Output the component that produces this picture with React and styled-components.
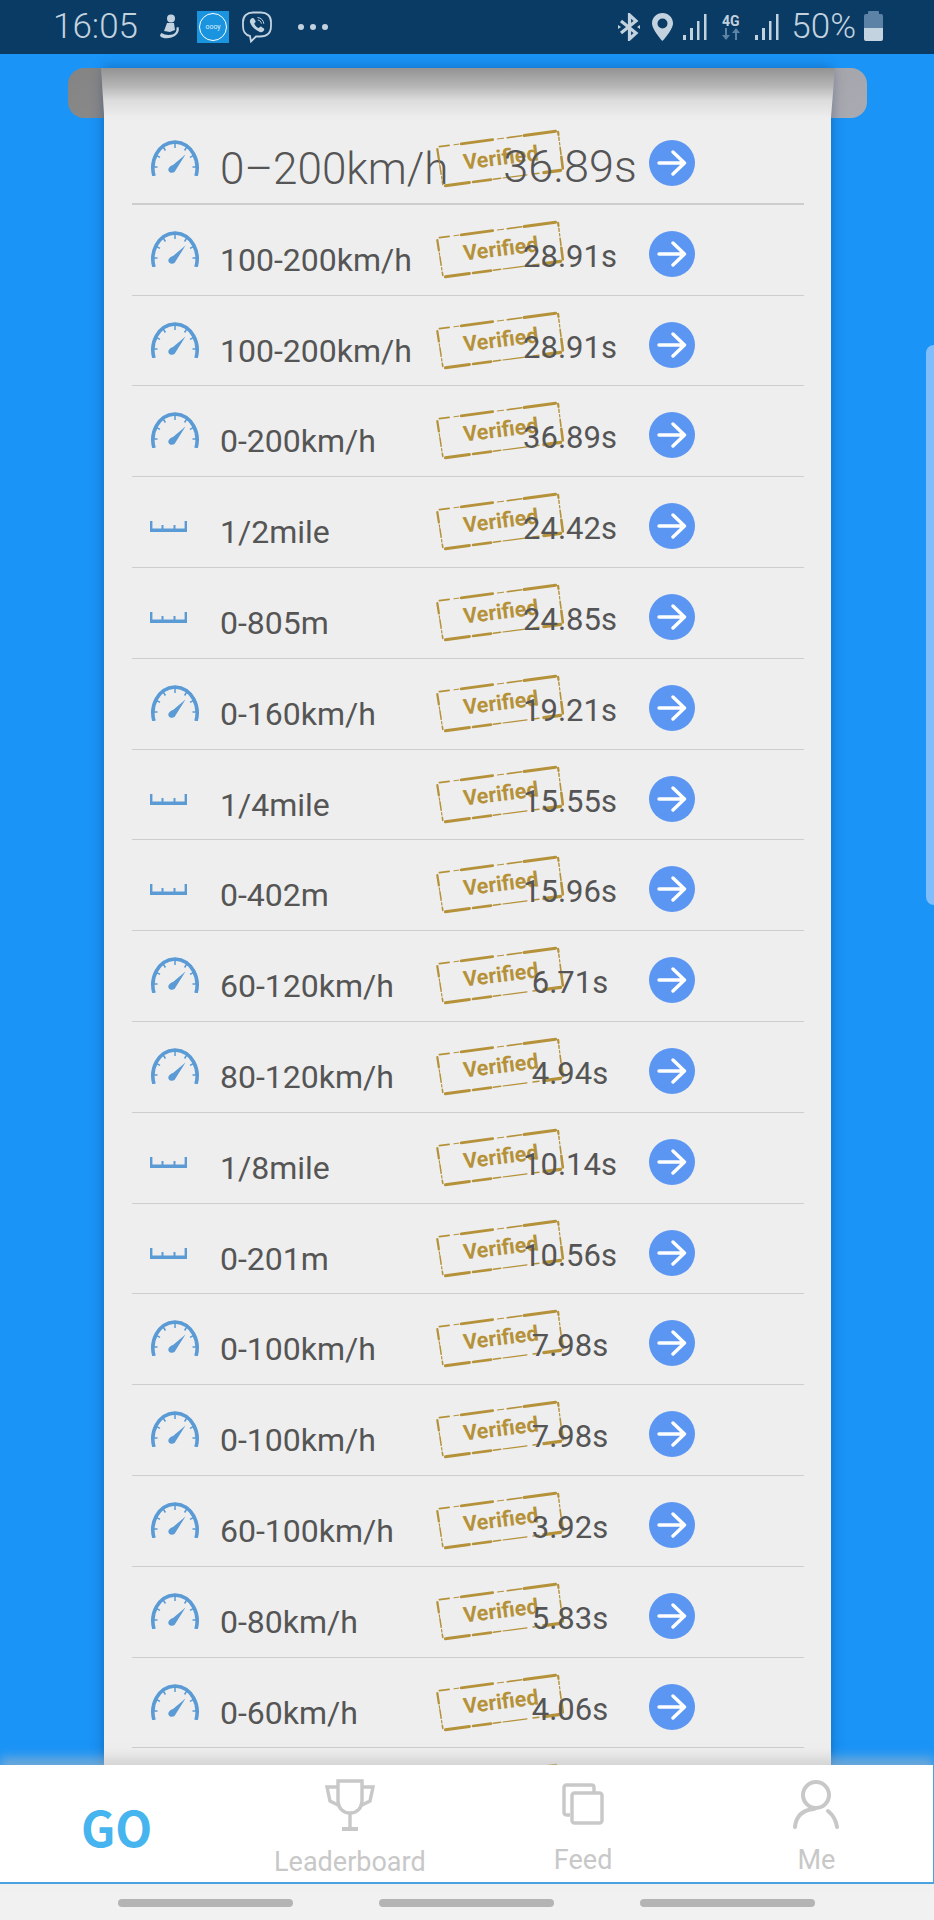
import React from "react";
import styled, { createGlobalStyle } from "styled-components";

const Global = createGlobalStyle`
  html, body { margin: 0; padding: 0; background: #1a94f7; }
  * { box-sizing: border-box; }
  #root { height: 1920px; overflow: hidden; }
`;

const Page = styled.div`
  height: 1920px;
  display: flex;
  flex-direction: column;
  position: relative;
  overflow: hidden;
  background: #1a94f7;
  font-family: Roboto, "Liberation Sans", sans-serif;
`;

const StatusBar = styled.header`
  flex: none;
  height: 54px;
  padding: 0 51px 0 53px;
  display: flex;
  align-items: center;
  justify-content: space-between;
  background: #0a3b64;
  color: #c3d2df;
`;
const StatusGroup = styled.div`
  display: flex;
  align-items: center;
`;
const Slot = styled.span`
  display: flex;
  align-items: center;
  margin-left: ${(p) => p.$gap || 0}px;
`;
const StatusText = styled.span`
  font-size: 35px;
  font-weight: 300;
  line-height: 54px;
`;
const AppSquare = styled.span`
  width: 32px;
  height: 32px;
  display: flex;
  align-items: center;
  justify-content: center;
  background: #1b94e0;
`;
const AppRing = styled.span`
  width: 28px;
  height: 28px;
  border: 1.5px solid #fff;
  border-radius: 50%;
  display: flex;
  align-items: center;
  justify-content: center;
  color: #d8eefc;
  font-size: 7px;
  line-height: 1;
`;
const Dots = styled.span`
  display: flex;
  gap: 6px;
  & > i {
    width: 6px;
    height: 6px;
    border-radius: 50%;
    background: #c3d2df;
  }
`;
const NetBadge = styled.span`
  width: 21px;
  display: flex;
  flex-direction: column;
  align-items: center;
  font-size: 14px;
  font-weight: 700;
  line-height: 14px;
  color: #c3d2df;
`;
const Battery = styled.span`
  width: 19px;
  height: 27px;
  position: relative;
  border-radius: 2px;
  background: linear-gradient(#5c83a5 0 52%, #c4d3e0 52% 100%);
  &::before {
    content: "";
    position: absolute;
    left: 4px;
    top: -3px;
    width: 11px;
    height: 3px;
    border-radius: 1px 1px 0 0;
    background: #5c83a5;
  }
`;

const Main = styled.main`
  flex: 1;
  min-height: 0;
  padding: 14px 67px 0 68px;
  overflow: hidden;
`;
const Roller = styled.div`
  height: 50px;
  margin-bottom: -50px;
  border-radius: 16px;
  background: linear-gradient(150deg, #848484 0%, #96969a 50%, #aaaab2 100%);
`;
const Paper = styled.section`
  position: relative;
  margin: 0 36px;
  height: 1800px;
  background: #eeeeee;
  box-shadow: 0 0 12px rgba(0, 40, 90, 0.4);
`;
const PaperCurl = styled.div`
  position: absolute;
  top: 0;
  left: -3px;
  right: -4px;
  height: 50px;
  clip-path: polygon(0 0, 100% 0, 99.45% 100%, 0.45% 100%);
  background: linear-gradient(#939393 0%, #b4b4b4 35%, #dcdcdc 65%, #eeeeee 100%);
`;
const List = styled.ul`
  position: relative;
  list-style: none;
  margin: 0;
  padding: 46px 27px 0 28px;
`;
const Row = styled.li`
  position: relative;
  height: 90.8px;
  display: grid;
  grid-template-columns: 88px 271px 158px 46px;
  align-items: start;
  border-bottom: ${(p) => (p.$big ? 2 : 1)}px solid #cdcdcd;
`;
const IconCell = styled.span`
  display: block;
  margin-left: 18px;
  margin-top: ${(p) => (p.$ruler ? 40 : 26)}px;
  height: 36px;
`;
const Label = styled.span`
  font-size: ${(p) => (p.$big ? 44 : 32)}px;
  font-weight: ${(p) => (p.$big ? 300 : 400)};
  line-height: ${(p) => (p.$big ? 52 : 38)}px;
  margin-top: ${(p) => (p.$big ? 29 : 36)}px;
  color: #555555;
  white-space: nowrap;
`;
const Time = styled.span`
  position: relative;
  z-index: 1;
  font-size: ${(p) => (p.$big ? 45 : 31)}px;
  font-weight: ${(p) => (p.$big ? 300 : 400)};
  line-height: ${(p) => (p.$big ? 52 : 38)}px;
  margin-top: ${(p) => (p.$big ? 27 : 33)}px;
  text-align: center;
  color: #555555;
  white-space: nowrap;
`;
const ArrowButton = styled.span`
  width: 46px;
  height: 46px;
  margin-top: 26px;
  border-radius: 50%;
  background: #5b96f2;
  display: flex;
  align-items: center;
  justify-content: center;
`;
const StampBox = styled.span`
  position: absolute;
  left: 302px;
  top: 15px;
  width: 132px;
  height: 60px;
`;
const StampText = styled.span`
  position: absolute;
  left: 29px;
  top: 17px;
  font-size: 21.5px;
  font-weight: 700;
  line-height: 24px;
  color: #b5923a;
  transform: rotate(-7deg);
`;

const TabBar = styled.nav`
  position: relative;
  z-index: 2;
  flex: none;
  height: 119px;
  display: grid;
  grid-template-columns: repeat(4, 1fr);
  background: #fff;
  border-bottom: 2px solid #4aa3e0;
  border-right: 1px solid #4aa3e0;
  box-shadow: 0 -8px 10px rgba(190, 190, 190, 0.5);
`;
const Tab = styled.div`
  display: flex;
  flex-direction: column;
  align-items: center;
  justify-content: flex-start;
  padding-top: ${(p) => p.$top}px;
  color: #c8c8c8;
`;
const TabLabel = styled.span`
  font-size: 27px;
  line-height: 30px;
  margin-top: ${(p) => p.$gap}px;
  white-space: nowrap;
`;
const GoLabel = styled.span`
  font-family: "Noto Sans CJK SC", "Noto Sans", sans-serif;
  font-size: 48px;
  font-weight: 700;
  line-height: 60px;
  margin-top: 31px;
  color: #46b4ee;
`;
const NavBar = styled.footer`
  flex: none;
  height: 36px;
  padding: 15px 119px 0 118px;
  display: flex;
  justify-content: space-between;
  background: #f1f1f1;
`;
const NavHandle = styled.i`
  display: block;
  width: 175px;
  height: 8px;
  border-radius: 4px;
  background: #b4b4b4;
`;
const EdgeHandle = styled.div`
  position: absolute;
  right: 0;
  top: 345px;
  width: 8px;
  height: 560px;
  border-radius: 8px 0 0 8px;
  background: #7fbdfb;
`;

const Gauge = () => (
  <svg width="50" height="36" viewBox="0 0 50 36" fill="none" stroke="#5a9ad5">
    <path d="M4 36 C0 22 7 3 25 2 C43 3 50 22 46 36" strokeWidth="3.6" />
    <path
      d="M25 3v5M13 6.500l2.400 4M37 6.500l-2.400 4M5.500 15l4.500 2.400M44.500 15l-4.500 2.400M3 27h4.500M47 27h-4.500"
      strokeWidth="1.5"
    />
    <path d="M35.500 14.500 L24.500 32 C21 34 17.500 31.800 18.500 28.500 C19.500 26.300 21 25.800 23 25 Z" fill="#5a9ad5" stroke="none" />
  </svg>
);
const Ruler = () => (
  <svg width="37" height="11" viewBox="0 0 37 11" fill="#5a9ad5">
    <rect x="0" y="7.500" width="37" height="3.500" />
    <rect x="0" y="0" width="2.400" height="9" />
    <rect x="11.500" y="4" width="2" height="5" />
    <rect x="23.500" y="4" width="2" height="5" />
    <rect x="34.600" y="0" width="2.400" height="9" />
  </svg>
);
const ArrowIcon = () => (
  <svg width="30" height="26" viewBox="0 0 30 26" fill="none" stroke="#fff" strokeWidth="3.400" strokeLinecap="round" strokeLinejoin="round">
    <path d="M2 13h25M16 2l11.500 11L16 24" />
  </svg>
);

const corners = { tl: [3, 18], tr: [124, 2], br: [129, 41], bl: [9, 57] };
const edges = [
  [corners.tl, corners.tr, [[0.02, 0.1, 1.8], [0.14, 0.18, 1], [0.2, 0.46, 2.8], [0.5, 0.55, 1], [0.58, 0.7, 1.6], [0.72, 0.98, 3]]],
  [corners.tr, corners.br, [[0.02, 0.1, 2.2], [0.16, 0.24, 1.4], [0.3, 0.36, 1.2], [0.42, 0.6, 1.6], [0.66, 0.96, 2.6]]],
  [corners.br, corners.bl, [[0.02, 0.16, 3.2], [0.2, 0.25, 1.4], [0.3, 0.5, 1.2], [0.52, 0.58, 1.6], [0.6, 0.75, 2.6], [0.78, 0.98, 3]]],
  [corners.bl, corners.tl, [[0.04, 0.12, 1.6], [0.18, 0.24, 1.2], [0.3, 0.52, 1.5], [0.56, 0.62, 1.2], [0.68, 0.95, 2.2]]],
];
const lerp = (a, b, t) => (a + (b - a) * t).toFixed(1);
const stampPath = edges.flatMap(([a, b, parts]) =>
  parts.map(([s, e, w]) => ({
    d: `M${lerp(a[0], b[0], s)} ${lerp(a[1], b[1], s)}L${lerp(a[0], b[0], e)} ${lerp(a[1], b[1], e)}`,
    w,
  }))
);

const Stamp = ({ bare }) => (
  <StampBox>
    <svg width="132" height="60" viewBox="0 0 132 60" fill="none" stroke="#b5923a" strokeLinecap="round">
      {stampPath.map((s) => (
        <path key={s.d} d={s.d} strokeWidth={s.w} />
      ))}
    </svg>
    {!bare && <StampText>Verified</StampText>}
  </StampBox>
);

const Samsung = () => (
  <svg width="22" height="26" viewBox="0 0 22 26" fill="#c3d2df">
    <circle cx="12" cy="4.500" r="4" />
    <path d="M8 9h7l1 7 -5 2 -6-1c1-3 2-5 3-8z" />
    <path d="M19.500 13c1.500 5-2 9-7 10.500-4 1.200-9 1-11-1 -1-1 0-2.500 1-3.500 3 2 7 2.500 11 1.500 3-1 4.500-3.500 4-7z" />
  </svg>
);
const Viber = () => (
  <svg width="30" height="32" viewBox="0 0 30 32" fill="none" stroke="#c3d2df" strokeWidth="1.800">
    <path d="M8 25C3 24 1 21 1 15V11C1 5 5 1.500 11 1.500h8C25 1.500 29 5 29 11v4c0 7-4 10.500-11 10.500h-4L9 30.500z" />
    <path
      d="M9.500 7.500c1-.8 2-.6 2.600.2l1.300 2c.5.800.3 1.500-.4 2l-.8.700c.8 2.200 2.400 3.800 4.600 4.700l.8-.9c.5-.6 1.300-.8 2-.3l2 1.400c.8.600.9 1.600.2 2.500-1 1.200-2.500 1.700-4 1.100C13 19 9.500 15.500 8 11.200c-.4-1.400.3-2.800 1.500-3.700z"
      fill="#c3d2df"
      stroke="none"
    />
    <path d="M15.500 6.500c3.500.2 6 2.800 6.300 6.300M15.800 9c2 .2 3.400 1.600 3.600 3.600" strokeWidth="1" />
  </svg>
);
const Bluetooth = () => (
  <svg width="24" height="28" viewBox="0 0 24 28" fill="none" stroke="#c3d2df" strokeWidth="3.200">
    <path d="M4 8l15 12-6.500 6V2l6.500 6L4 20" />
    <path d="M1 12l3 2-3 2zM23 12l-3 2 3 2z" fill="#c3d2df" stroke="none" />
  </svg>
);
const Pin = () => (
  <svg width="21" height="28" viewBox="0 0 21 28">
    <path
      fillRule="evenodd"
      fill="#c3d2df"
      d="M10.500 0C4.700 0 0 4.500 0 10.300 0 17 10.500 28 10.500 28S21 17 21 10.300C21 4.500 16.300 0 10.500 0zm0 5.500a5 5 0 1 1 0 10 5 5 0 0 1 0-10z"
    />
  </svg>
);
const Signal = () => (
  <svg width="24" height="26" viewBox="0 0 24 26" fill="#c3d2df">
    <rect x="0" y="21" width="3" height="5" />
    <rect x="7" y="14" width="3" height="12" />
    <rect x="14" y="7" width="2.500" height="19" />
    <rect x="21" y="0" width="2.500" height="26" />
  </svg>
);
const NetArrows = () => (
  <svg width="20" height="12" viewBox="0 0 20 12" fill="#5c83a5">
    <path d="M4 0h2v7h3l-4 5-4-5h3zM14 12h2V5h3l-4-5-4 5h3z" />
  </svg>
);

const Trophy = () => (
  <svg width="50" height="52" viewBox="0 0 50 52" fill="none" stroke="#c8c8c8" strokeWidth="3.400">
    <path d="M13 2h24v20c0 7-5 12-12 12S13 29 13 22z" />
    <path d="M13 8H2l3 14 10 5M37 8h11l-3 14-10 5" />
    <path d="M25 34v15" />
    <path d="M17 50h16" strokeWidth="4" />
  </svg>
);
const FeedIcon = () => (
  <svg width="42" height="42" viewBox="0 0 42 42" fill="none" stroke="#c8c8c8" strokeWidth="3.400">
    <path d="M8 32H4.500Q2 32 2 29.500V4.500Q2 2 4.500 2h25Q32 2 32 4.500V9" />
    <rect x="10" y="10" width="30" height="30" rx="2.500" />
  </svg>
);
const MeIcon = () => (
  <svg width="46" height="50" viewBox="0 0 46 50" fill="none" stroke="#c8c8c8" strokeWidth="4" strokeLinecap="round">
    <circle cx="23" cy="15" r="13" />
    <path d="M2 47C3 37 9 30 21 29M35 31c5 4 8 9 9 16" />
  </svg>
);

const rows = [
  { label: "0–200km/h", time: "36.89s", big: true },
  { label: "100-200km/h", time: "28.91s" },
  { label: "100-200km/h", time: "28.91s" },
  { label: "0-200km/h", time: "36.89s" },
  { label: "1/2mile", time: "24.42s", ruler: true },
  { label: "0-805m", time: "24.85s", ruler: true },
  { label: "0-160km/h", time: "19.21s" },
  { label: "1/4mile", time: "15.55s", ruler: true },
  { label: "0-402m", time: "15.96s", ruler: true },
  { label: "60-120km/h", time: "6.71s" },
  { label: "80-120km/h", time: "4.94s" },
  { label: "1/8mile", time: "10.14s", ruler: true },
  { label: "0-201m", time: "10.56s", ruler: true },
  { label: "0-100km/h", time: "7.98s" },
  { label: "0-100km/h", time: "7.98s" },
  { label: "60-100km/h", time: "3.92s" },
  { label: "0-80km/h", time: "5.83s" },
  { label: "0-60km/h", time: "4.06s" },
];

export default function App() {
  return (
    <Page>
      <Global />
      <StatusBar>
        <StatusGroup>
          <StatusText>16:05</StatusText>
          <Slot $gap={21}><Samsung /></Slot>
          <Slot $gap={16}>
            <AppSquare><AppRing>oooy</AppRing></AppSquare>
          </Slot>
          <Slot $gap={13}><Viber /></Slot>
          <Slot $gap={26}><Dots><i /><i /><i /></Dots></Slot>
        </StatusGroup>
        <StatusGroup>
          <Bluetooth />
          <Slot $gap={11}><Pin /></Slot>
          <Slot $gap={10}><Signal /></Slot>
          <Slot $gap={13}>
            <NetBadge>4G<NetArrows /></NetBadge>
          </Slot>
          <Slot $gap={14}><Signal /></Slot>
          <Slot $gap={12}><StatusText>50%</StatusText></Slot>
          <Slot $gap={8}><Battery /></Slot>
        </StatusGroup>
      </StatusBar>

      <Main>
        <Roller />
        <Paper>
          <PaperCurl />
          <List>
            {rows.map((r, i) => (
              <Row key={i} $big={r.big}>
                <IconCell $ruler={r.ruler}>{r.ruler ? <Ruler /> : <Gauge />}</IconCell>
                <Label $big={r.big}>{r.label}</Label>
                <Time $big={r.big}>{r.time}</Time>
                <ArrowButton><ArrowIcon /></ArrowButton>
                <Stamp />
              </Row>
            ))}
            <Row><Stamp bare /></Row>
          </List>
        </Paper>
      </Main>

      <TabBar>
        <Tab $top={0}><GoLabel>GO</GoLabel></Tab>
        <Tab $top={14}><Trophy /><TabLabel $gap={16}>Leaderboard</TabLabel></Tab>
        <Tab $top={18}><FeedIcon /><TabLabel $gap={20}>Feed</TabLabel></Tab>
        <Tab $top={15}><MeIcon /><TabLabel $gap={15}>Me</TabLabel></Tab>
      </TabBar>
      <NavBar>
        <NavHandle /><NavHandle /><NavHandle />
      </NavBar>
      <EdgeHandle />
    </Page>
  );
}
